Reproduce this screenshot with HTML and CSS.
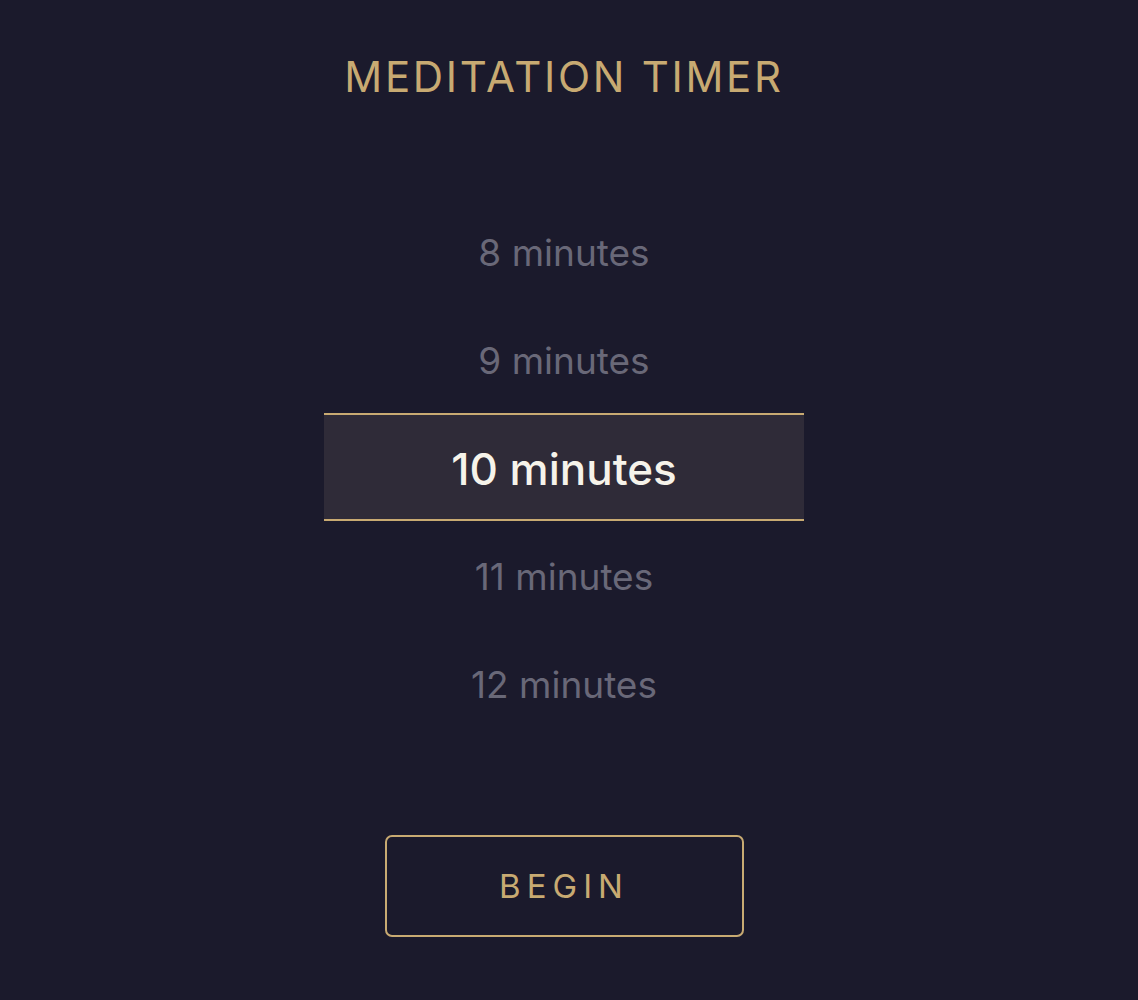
FILE: index.html
```html
<!DOCTYPE html>
<html lang="en">
<head>
<meta charset="utf-8">
<title>Meditation Timer</title>
<link rel="stylesheet" href="styles.css">
</head>
<body>
<main class="timer">
  <h1 class="timer-title">MEDITATION TIMER</h1>
  <ul class="picker">
    <li class="picker-item">8 minutes</li>
    <li class="picker-item">9 minutes</li>
    <li class="picker-item is-selected">10 minutes</li>
    <li class="picker-item">11 minutes</li>
    <li class="picker-item">12 minutes</li>
  </ul>
  <button class="begin-btn" type="button">BEGIN</button>
</main>
</body>
</html>
```
FILE: styles.css
```css
* { box-sizing: border-box; }

html, body {
  margin: 0;
  padding: 0;
  background: #1b1a2c;
  height: 100%;
}

body {
  font-family: Inter, "Noto Sans", sans-serif;
}

.timer {
  display: flex;
  flex-direction: column;
  align-items: center;
  padding: 52px 10px 0 0;
}

.timer-title {
  margin: 0;
  font-size: 42px;
  font-weight: 400;
  letter-spacing: 2.7px;
  line-height: 50px;
  color: #c8aa72;
}

.picker {
  list-style: none;
  margin: 95px 0 0;
  padding: 0;
  width: 480px;
}

.picker-item {
  height: 108px;
  display: flex;
  align-items: center;
  justify-content: center;
  padding-top: 3px;
  font-size: 37px;
  color: #696878;
}

.picker-item.is-selected {
  background: #2f2b38;
  border-top: 2px solid #c8aa72;
  border-bottom: 2px solid #c8aa72;
  font-size: 44px;
  font-weight: 500;
  color: #f6f3ea;
}

.begin-btn {
  margin-top: 98px;
  width: 359px;
  height: 102px;
  background: transparent;
  border: 2px solid #c8aa72;
  border-radius: 7px;
  color: #c8aa72;
  font-family: Inter, "Noto Sans", sans-serif;
  font-size: 33px;
  font-weight: 400;
  letter-spacing: 6px;
  padding: 0;
}
```
